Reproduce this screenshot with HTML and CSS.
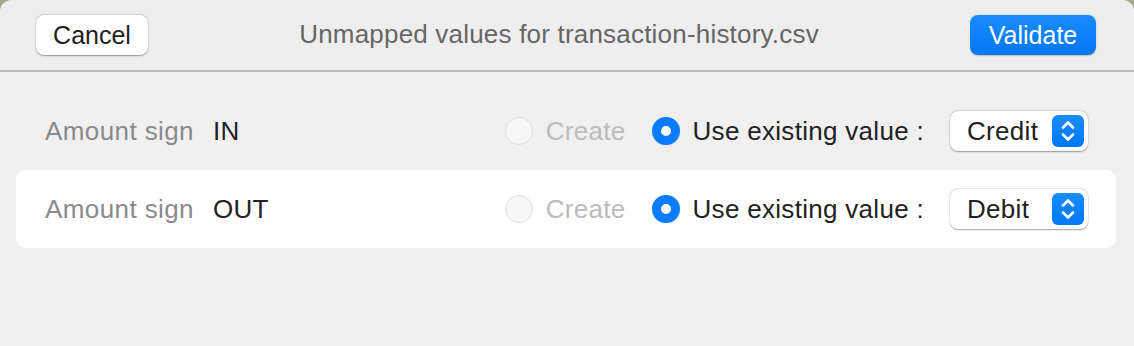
FILE: index.html
```html
<!DOCTYPE html>
<html>
<head>
<meta charset="utf-8">
<link rel="stylesheet" href="styles.css">
</head>
<body>
<div class="window">
  <header class="toolbar">
    <button class="btn btn-cancel">Cancel</button>
    <div class="title">Unmapped values for transaction-history.csv</div>
    <button class="btn btn-primary">Validate</button>
  </header>
  <main class="content">
    <div class="row">
      <span class="label">Amount sign</span>
      <span class="value">IN</span>
      <div class="choices">
        <span class="radio radio-off"></span>
        <span class="opt opt-disabled">Create</span>
        <span class="radio radio-on"></span>
        <span class="opt">Use existing value :</span>
        <div class="popup">
          <span class="popup-text">Credit</span>
          <span class="stepper"><svg width="32" height="32" viewBox="0 0 32 32"><path d="M11 12.5 L16 7.5 L21 12.5 M11 19.5 L16 24.5 L21 19.5" fill="none" stroke="#fff" stroke-width="2.6" stroke-linecap="round" stroke-linejoin="round"/></svg></span>
        </div>
      </div>
    </div>
    <div class="row row-alt">
      <span class="label">Amount sign</span>
      <span class="value">OUT</span>
      <div class="choices">
        <span class="radio radio-off"></span>
        <span class="opt opt-disabled">Create</span>
        <span class="radio radio-on"></span>
        <span class="opt">Use existing value :</span>
        <div class="popup">
          <span class="popup-text">Debit</span>
          <span class="stepper"><svg width="32" height="32" viewBox="0 0 32 32"><path d="M11 12.5 L16 7.5 L21 12.5 M11 19.5 L16 24.5 L21 19.5" fill="none" stroke="#fff" stroke-width="2.6" stroke-linecap="round" stroke-linejoin="round"/></svg></span>
        </div>
      </div>
    </div>
  </main>
</div>
</body>
</html>
```
FILE: styles.css
```css
html, body {
  margin: 0;
  padding: 0;
  height: 100%;
}
body {
  background: #9fae8a;
  font-family: "Liberation Sans", Arial, sans-serif;
  font-size: 26px;
  overflow: hidden;
}
.window {
  height: 346px;
  background: #f0f0f0;
  border-radius: 12px 12px 0 0;
  overflow: hidden;
}
.toolbar {
  height: 70px;
  background: #eeeeee;
  border-bottom: 2px solid #bdbdbd;
  display: flex;
  align-items: center;
  padding: 0 38px 0 36px;
  box-sizing: content-box;
}
.btn {
  height: 40px;
  border: none;
  border-radius: 8px;
  font-family: inherit;
  font-size: 25px;
  padding: 0;
  margin: 0;
}
.btn-cancel {
  width: 112px;
  background: #fff;
  color: #222;
  box-shadow: 0 0.5px 1.5px rgba(0,0,0,0.35), 0 0 0 0.5px rgba(0,0,0,0.08);
}
.btn-primary {
  width: 126px;
  background: linear-gradient(#1a8cff, #0077f5);
  color: #fff;
  box-shadow: 0 0.5px 1.5px rgba(0,0,0,0.2);
}
.title {
  flex: 1;
  text-align: center;
  color: #666;
  font-size: 26px;
  letter-spacing: 0.2px;
  padding-bottom: 2px;
}
.content {
  padding: 20px 18px 0 16px;
}
.row {
  height: 78px;
  display: flex;
  align-items: center;
  padding: 0 28px 0 29px;
  border-radius: 9px;
}
.row-alt {
  background: #fff;
}
.label {
  width: 168px;
  color: #8a8a8a;
  letter-spacing: 0.4px;
}
.value {
  color: #222;
  letter-spacing: 0.3px;
}
.choices {
  margin-left: auto;
  display: flex;
  align-items: center;
}
.radio {
  width: 28px;
  height: 28px;
  border-radius: 50%;
  box-sizing: border-box;
  flex: none;
}
.radio-off {
  background: #f7f7f7;
  border: 1px solid #dedede;
}
.radio-on {
  background: #fff;
  border: 9px solid #0a7cff;
  margin-left: 26px;
  box-shadow: 0 0.5px 1px rgba(0,0,0,0.15);
}
.opt {
  margin-left: 13px;
  color: #222;
  letter-spacing: 0.3px;
}
.opt-disabled {
  color: #bcbcbc;
}
.popup {
  margin-left: 26px;
  width: 138px;
  height: 40px;
  box-sizing: border-box;
  background: #fff;
  border-radius: 8px;
  box-shadow: 0 0.5px 1.5px rgba(0,0,0,0.35), 0 0 0 0.5px rgba(0,0,0,0.08);
  display: flex;
  align-items: center;
  padding: 0 4px 0 17px;
}
.popup-text {
  flex: 1;
  color: #222;
  letter-spacing: 0.3px;
}
.stepper {
  width: 32px;
  height: 32px;
  border-radius: 6px;
  background: linear-gradient(#1a8cff, #0077f5);
  display: flex;
}
```
